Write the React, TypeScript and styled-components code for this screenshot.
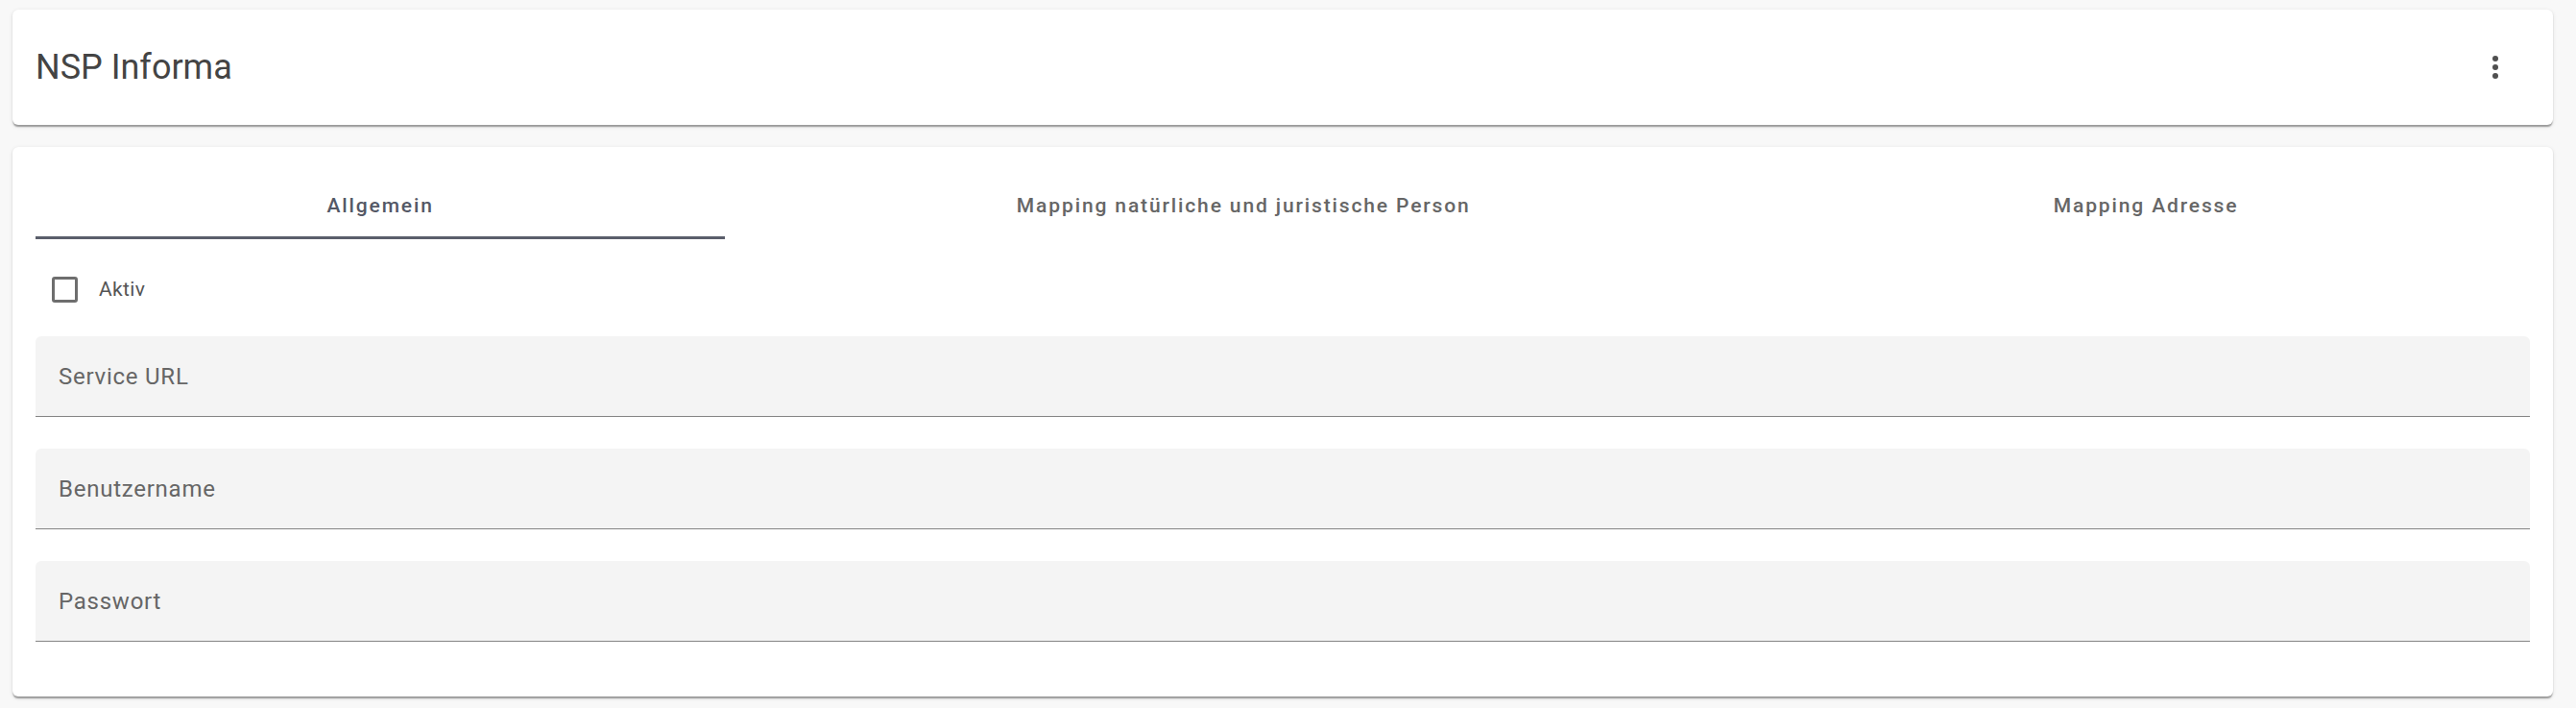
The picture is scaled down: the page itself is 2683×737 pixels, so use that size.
import React from "react";
import styled, { createGlobalStyle } from "styled-components";

const Global = createGlobalStyle`
  html, body { margin: 0; padding: 0; background: #f8f8f8; }
  body { font-family: Roboto, "Noto Sans", Arial, sans-serif; }
  * { box-sizing: border-box; }
`;

const Page = styled.div`
  display: flex;
  flex-direction: column;
  gap: 23px;
  padding: 10px 24px 13px 13px;
`;

const Card = styled.div`
  background: #fff;
  border-radius: 6px;
  box-shadow: 0 3px 1.5px -1.5px rgba(0, 0, 0, 0.22), 0 1.5px 1.5px 0 rgba(0, 0, 0, 0.14),
    0 1.5px 4.5px 0 rgba(0, 0, 0, 0.1);
`;

const HeaderCard = styled(Card)`
  height: 120px;
  display: flex;
  align-items: center;
  justify-content: space-between;
  padding: 0 24px;
`;

const Title = styled.h1`
  margin: 0;
  font-size: 36px;
  font-weight: 400;
  color: #444;
  letter-spacing: 0;
`;

const IconButton = styled.button`
  width: 72px;
  height: 72px;
  border: none;
  background: transparent;
  display: flex;
  align-items: center;
  justify-content: center;
  padding: 0;
  color: #505050;
`;

const ContentCard = styled(Card)`
  padding: 24px;
  display: flex;
  flex-direction: column;
`;

const TabBar = styled.div`
  display: flex;
  height: 72px;
`;

const Tab = styled.div<{ $active?: boolean }>`
  flex: 1 1 auto;
  padding: 0 24px;
  display: flex;
  align-items: center;
  justify-content: center;
  font-size: 21px;
  font-weight: 500;
  letter-spacing: 1.875px;
  white-space: nowrap;
  color: ${(p) => (p.$active ? "#545866" : "#666")};
  border-bottom: 3px solid ${(p) => (p.$active ? "#5a5e6b" : "transparent")};
  padding-top: 4px;
`;

const CheckRow = styled.label`
  display: flex;
  align-items: center;
  height: 60px;
  margin: 22px 0 19px;
`;

const BoxWrap = styled.span`
  width: 60px;
  height: 60px;
  display: flex;
  align-items: center;
  justify-content: center;
`;

const Box = styled.span`
  width: 27px;
  height: 27px;
  border: 3px solid #6e6e6e;
  border-radius: 3px;
`;

const CheckLabel = styled.span`
  padding-left: 6px;
  font-size: 21px;
  letter-spacing: 0.37px;
  color: #555;
`;

const Field = styled.div`
  height: 84px;
  background: #f4f4f4;
  border-radius: 6px 6px 0 0;
  border-bottom: 1.5px solid #858585;
  display: flex;
  align-items: center;
  padding: 0 24px;
  margin-bottom: 33px;
`;

const FieldLabel = styled.span`
  font-size: 24px;
  letter-spacing: 0.75px;
  color: #666;
`;

const MoreVert = () => (
  <svg width="36" height="36" viewBox="0 0 24 24" fill="currentColor">
    <circle cx="12" cy="6" r="2" />
    <circle cx="12" cy="12" r="2" />
    <circle cx="12" cy="18" r="2" />
  </svg>
);

export default function App() {
  return (
    <>
      <Global />
      <Page>
        <HeaderCard>
          <Title>NSP Informa</Title>
          <IconButton aria-label="Menü">
            <MoreVert />
          </IconButton>
        </HeaderCard>
        <ContentCard>
          <TabBar>
            <Tab $active>Allgemein</Tab>
            <Tab>Mapping natürliche und juristische Person</Tab>
            <Tab>Mapping Adresse</Tab>
          </TabBar>
          <CheckRow>
            <BoxWrap>
              <Box />
            </BoxWrap>
            <CheckLabel>Aktiv</CheckLabel>
          </CheckRow>
          {["Service URL", "Benutzername", "Passwort"].map((l) => (
            <Field key={l}>
              <FieldLabel>{l}</FieldLabel>
            </Field>
          ))}
        </ContentCard>
      </Page>
    </>
  );
}
